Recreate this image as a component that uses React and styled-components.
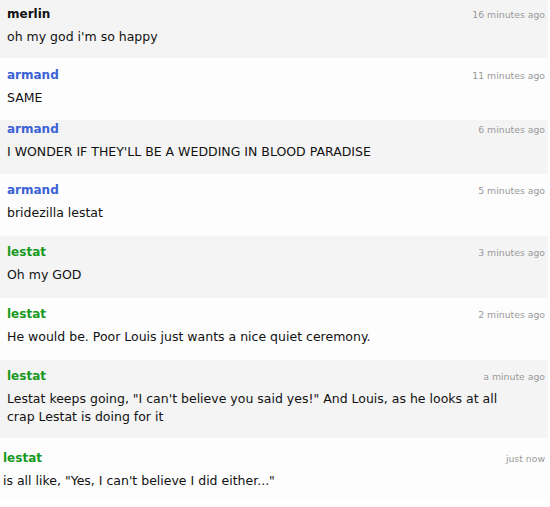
import React from "react";
import styled, {createGlobalStyle} from "styled-components";

const GlobalStyle = createGlobalStyle`
  html, body {
    margin: 0;
    padding: 0;
    background: #ffffff;
  }
  body {
    font-family: "DejaVu Sans", Verdana, sans-serif;
  }
`;

const Feed = styled.div`
  width: 548px;
  display: flex;
  flex-direction: column;
`;

const Row = styled.div`
  background-color: ${props => props.$odd ? '#f4f4f4' : '#fdfdfd'};
  padding: ${props => props.$top}px 3px ${props => props.$bottom}px 7px;
  margin-left: ${props => props.$shift}px;
`;

const Head = styled.div`
  display: flex;
  justify-content: space-between;
  align-items: center;
  height: 18px;
`;

const Name = styled.span`
  font-weight: bold;
  font-size: 12px;
  color: ${props => props.$color};
`;

const Time = styled.span`
  font-size: 9.3px;
  color: #999999;
`;

const Text = styled.div`
  margin-top: 5px;
  font-size: 12.5px;
  line-height: 18px;
  color: #111;
  padding-right: 30px;
`;

const colors = {
    merlin: '#111111',
    armand: '#3b62d4',
    lestat: '#17991c'
};

const messages = [
    {id: 1, user: 'merlin', time: '16 minutes ago', text: "oh my god i'm so happy", top: 5, bottom: 12},
    {id: 2, user: 'armand', time: '11 minutes ago', text: 'SAME', top: 8, bottom: 13},
    {id: 3, user: 'armand', time: '6 minutes ago', text: "I WONDER IF THEY'LL BE A WEDDING IN BLOOD PARADISE", top: 0, bottom: 13},
    {id: 4, user: 'armand', time: '5 minutes ago', text: 'bridezilla lestat', top: 7},
    {id: 5, user: 'lestat', time: '3 minutes ago', text: 'Oh my GOD', top: 7},
    {id: 6, user: 'lestat', time: '2 minutes ago', text: 'He would be. Poor Louis just wants a nice quiet ceremony.', top: 7},
    {id: 7, user: 'lestat', time: 'a minute ago', text: 'Lestat keeps going, "I can\'t believe you said yes!" And Louis, as he looks at all crap Lestat is doing for it', top: 7, bottom: 12},
    {id: 8, user: 'lestat', time: 'just now', text: 'is all like, "Yes, I can\'t believe I did either..."', top: 11, bottom: 8, shift: -4}
];

const App = () => {
    return (
        <div>
            <GlobalStyle/>
            <Feed>
                {messages.map((item, i) => (
                    <Row key={item.id} $odd={i % 2 === 0} $top={item.top} $bottom={item.bottom || 14} $shift={item.shift || 0}>
                        <Head>
                            <Name $color={colors[item.user]}>{item.user}</Name>
                            <Time>{item.time}</Time>
                        </Head>
                        <Text>{item.text}</Text>
                    </Row>
                ))}
            </Feed>
        </div>
    );
}

export default App;
